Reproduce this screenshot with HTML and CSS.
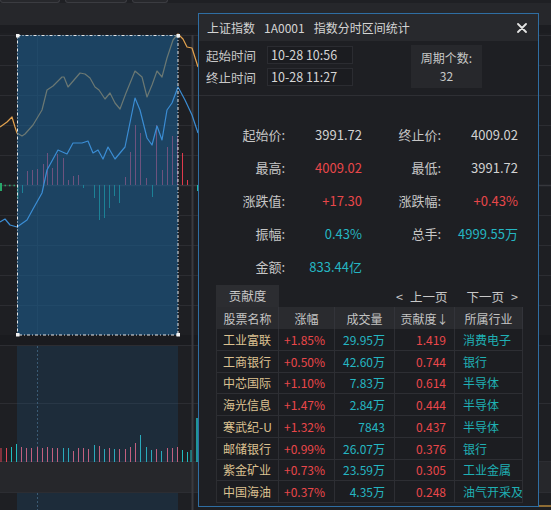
FILE: index.html
```html
<!DOCTYPE html>
<html lang="zh">
<head>
<meta charset="utf-8">
<title>指数分时区间统计</title>
<link rel="stylesheet" href="styles.css">
</head>
<body>
<div class="app">
  <div class="toolbar">
    <span class="tb-btn b1"></span><span class="tb-btn b2"></span><span class="tb-btn b3"></span>
  </div>
  <div class="header"></div>
  <div class="subbar"></div>
  <svg class="chart" viewBox="0 33 551 477" width="551" height="477" xmlns="http://www.w3.org/2000/svg">
    <rect x="0" y="33" width="551" height="302" fill="#1e1f23"/>
    <rect x="0" y="335" width="551" height="10" fill="#1a1b1f"/>
    <rect x="0" y="345" width="551" height="117" fill="#1e1f23"/>
    <rect x="0" y="462" width="551" height="30" fill="#26272b"/>
    <rect x="0" y="492" width="551" height="18" fill="#1e1f23"/>
    <g stroke="#2c2d32" stroke-width="1">
      <line x1="0" y1="35.5" x2="551" y2="35.5"/>
      <line x1="0" y1="65.5" x2="551" y2="65.5"/>
      <line x1="0" y1="95.5" x2="551" y2="95.5"/>
      <line x1="0" y1="125.5" x2="551" y2="125.5"/>
      <line x1="0" y1="155.5" x2="551" y2="155.5"/>
      <line x1="0" y1="215.5" x2="551" y2="215.5"/>
      <line x1="0" y1="245.5" x2="551" y2="245.5"/>
      <line x1="0" y1="275.5" x2="551" y2="275.5"/>
      <line x1="0" y1="305.5" x2="551" y2="305.5"/>
      <line x1="0" y1="345.5" x2="551" y2="345.5"/>
      <line x1="0" y1="403.5" x2="551" y2="403.5"/>
      <line x1="0" y1="461.5" x2="551" y2="461.5"/>
      <line x1="0" y1="492.5" x2="551" y2="492.5"/>
      <line x1="37.5" y1="35" x2="37.5" y2="335"/>
    </g>
    <line x1="0" y1="185.5" x2="551" y2="185.5" stroke="#36373c" stroke-width="1.5"/>
    <line x1="0" y1="185.5" x2="17" y2="185.5" stroke="#2aa36a" stroke-width="1.5" stroke-dasharray="1.5 3"/>
    <rect x="0" y="183" width="2" height="8" fill="#27a86a"/>
    <rect x="17" y="185" width="1.5" height="14" fill="#27a86a"/>
    <line x1="192.5" y1="35" x2="192.5" y2="510" stroke="#3a3b40" stroke-width="2"/>

    <g stroke="#e8466a" stroke-width="1">
      <line x1="27.5" y1="185" x2="27.5" y2="171"/>
      <line x1="32.5" y1="185" x2="32.5" y2="170"/>
      <line x1="37.5" y1="185" x2="37.5" y2="169"/>
      <line x1="43.5" y1="185" x2="43.5" y2="164"/>
      <line x1="47.5" y1="185" x2="47.5" y2="153"/>
      <line x1="52.5" y1="185" x2="52.5" y2="168"/>
      <line x1="57.5" y1="185" x2="57.5" y2="154"/>
      <line x1="63.5" y1="185" x2="63.5" y2="158"/>
      <line x1="68.5" y1="185" x2="68.5" y2="180"/>
      <line x1="73.5" y1="185" x2="73.5" y2="176"/>
      <line x1="78.5" y1="185" x2="78.5" y2="175"/>
      <line x1="125.5" y1="185" x2="125.5" y2="177"/>
      <line x1="130.5" y1="185" x2="130.5" y2="152"/>
      <line x1="135.5" y1="185" x2="135.5" y2="125"/>
      <line x1="140.5" y1="185" x2="140.5" y2="133"/>
      <line x1="146.5" y1="185" x2="146.5" y2="178"/>
      <line x1="156.5" y1="185" x2="156.5" y2="125"/>
      <line x1="162.5" y1="185" x2="162.5" y2="170"/>
      <line x1="167.5" y1="185" x2="167.5" y2="147"/>
      <line x1="172.5" y1="185" x2="172.5" y2="136"/>
      <line x1="177.5" y1="185" x2="177.5" y2="136"/>
    </g>
    <g stroke="#e03a4c" stroke-width="1">
      <line x1="182.5" y1="185" x2="182.5" y2="153"/>
      <line x1="187.5" y1="185" x2="187.5" y2="180"/>
    </g>
    <g stroke="#1fb8a6" stroke-width="1">
      <line x1="22.5" y1="185" x2="22.5" y2="193"/>
      <line x1="83.5" y1="185" x2="83.5" y2="188"/>
      <line x1="94.5" y1="185" x2="94.5" y2="198"/>
      <line x1="99.5" y1="185" x2="99.5" y2="220"/>
      <line x1="104.5" y1="185" x2="104.5" y2="218"/>
      <line x1="109.5" y1="185" x2="109.5" y2="208"/>
      <line x1="114.5" y1="185" x2="114.5" y2="196"/>
      <line x1="119.5" y1="185" x2="119.5" y2="203"/>
      <line x1="152.5" y1="185" x2="152.5" y2="197"/>
      <line x1="197.5" y1="185" x2="197.5" y2="191"/>
    </g>

    <polyline fill="none" stroke="#e3a24e" stroke-width="1.2" stroke-linejoin="round"
      points="0,127 7,122 12,117 15,127 17,133 22,136 25,134 33,125 42,110 47,90 53,86 62,77 64,77 68,87 80,73 85,74 90,78 95,87 99,90 105,99 110,93 115,103 120,109 126,93 135,71 142,77 147,97 152,85 157,71 162,77 167,58 173,40 178,34 183,39 187,47 192,48 198,67"/>

    <rect x="17" y="35" width="161" height="300" fill="#1a5b8c" fill-opacity="0.6"/>

    <polyline fill="none" stroke="#3b8dd4" stroke-width="1.2" stroke-linejoin="round"
      points="0,222 5,219 10,225 17,227 27,220 33,209 42,193 47,170 58,150 67,154 73,143 82,143 88,141 93,153 98,150 103,159 108,147 115,159 125,147 135,98 140,110 147,138 152,145 157,126 162,140 167,110 172,103 178,87 185,100 192,115 198,133"/>

    <rect x="17.5" y="35.5" width="160.5" height="299.5" fill="none" stroke="#e6e6e6" stroke-width="1" stroke-dasharray="3 2 1 2"/>
    <g fill="#f2f2f2">
      <rect x="16" y="34" width="3.5" height="3.5"/>
      <rect x="176.5" y="34" width="3.5" height="3.5"/>
      <rect x="16" y="333" width="3.5" height="3.5"/>
      <rect x="176.5" y="333" width="3.5" height="3.5"/>
    </g>

    <rect x="17" y="346" width="161" height="116" fill="#1a5b8c" fill-opacity="0.22"/>
    <rect x="17" y="493" width="161" height="17" fill="#1a5b8c" fill-opacity="0.22"/>
    <line x1="37.5" y1="346" x2="37.5" y2="461" stroke="#3b5b74" stroke-dasharray="2 2"/>
    <line x1="37.5" y1="493" x2="37.5" y2="510" stroke="#3b5b74" stroke-dasharray="2 2"/>
    <g stroke-width="1">
      <line x1="1" y1="462" x2="1" y2="448" stroke="#e04656"/>
      <line x1="6.5" y1="462" x2="6.5" y2="448" stroke="#e04656"/>
      <line x1="11.5" y1="462" x2="11.5" y2="447" stroke="#20bcc0"/>
      <line x1="16.5" y1="462" x2="16.5" y2="444" stroke="#20bcc0"/>
      <line x1="21.5" y1="462" x2="21.5" y2="447" stroke="#c2607e"/>
      <line x1="26.5" y1="462" x2="26.5" y2="448" stroke="#c2607e"/>
      <line x1="31.5" y1="462" x2="31.5" y2="448" stroke="#c2607e"/>
      <line x1="37.5" y1="462" x2="37.5" y2="447" stroke="#c2607e"/>
      <line x1="42.5" y1="462" x2="42.5" y2="448" stroke="#c2607e"/>
      <line x1="47.5" y1="462" x2="47.5" y2="447" stroke="#c2607e"/>
      <line x1="52.5" y1="462" x2="52.5" y2="448" stroke="#c2607e"/>
      <line x1="57.5" y1="462" x2="57.5" y2="448" stroke="#c2607e"/>
      <line x1="63.5" y1="462" x2="63.5" y2="448" stroke="#2aaabb"/>
      <line x1="68.5" y1="462" x2="68.5" y2="448" stroke="#2aaabb"/>
      <line x1="73.5" y1="462" x2="73.5" y2="451" stroke="#c2607e"/>
      <line x1="78.5" y1="462" x2="78.5" y2="448" stroke="#c2607e"/>
      <line x1="83.5" y1="462" x2="83.5" y2="448" stroke="#c2607e"/>
      <line x1="88.5" y1="462" x2="88.5" y2="449" stroke="#c2607e"/>
      <line x1="94.5" y1="462" x2="94.5" y2="445" stroke="#2aaabb"/>
      <line x1="99.5" y1="462" x2="99.5" y2="446" stroke="#c2607e"/>
      <line x1="104.5" y1="462" x2="104.5" y2="449" stroke="#2aaabb"/>
      <line x1="109.5" y1="462" x2="109.5" y2="448" stroke="#c2607e"/>
      <line x1="114.5" y1="462" x2="114.5" y2="449" stroke="#2aaabb"/>
      <line x1="119.5" y1="462" x2="119.5" y2="449" stroke="#c2607e"/>
      <line x1="125.5" y1="462" x2="125.5" y2="449" stroke="#c2607e"/>
      <line x1="130.5" y1="462" x2="130.5" y2="447" stroke="#c2607e"/>
      <line x1="135.5" y1="462" x2="135.5" y2="443" stroke="#c2607e"/>
      <line x1="140.5" y1="462" x2="140.5" y2="435" stroke="#2aaabb"/>
      <line x1="146.5" y1="462" x2="146.5" y2="447" stroke="#2aaabb"/>
      <line x1="151.5" y1="462" x2="151.5" y2="450" stroke="#2aaabb"/>
      <line x1="156.5" y1="462" x2="156.5" y2="449" stroke="#c2607e"/>
      <line x1="161.5" y1="462" x2="161.5" y2="451" stroke="#2aaabb"/>
      <line x1="167.5" y1="462" x2="167.5" y2="448" stroke="#c2607e"/>
      <line x1="172.5" y1="462" x2="172.5" y2="448" stroke="#c2607e"/>
      <line x1="177.5" y1="462" x2="177.5" y2="447" stroke="#c2607e"/>
      <line x1="182.5" y1="462" x2="182.5" y2="450" stroke="#20bcc0"/>
      <line x1="187.5" y1="462" x2="187.5" y2="452" stroke="#20bcc0"/>
      <line x1="191" y1="462" x2="191" y2="450" stroke="#20bcc0"/>
      <line x1="197" y1="462" x2="197" y2="418" stroke="#20bcc0" stroke-width="1.5"/>
    </g>
    <line x1="539" y1="506" x2="551" y2="506" stroke="#d9a040" stroke-width="1.2"/>
  </svg>

  <div class="dialog">
    <div class="dlg-title">
      <span>上证指数</span><span>1A0001</span><span>指数分时区间统计</span>
      <svg class="close" viewBox="0 0 10 10" width="10" height="10"><path d="M1 1 L9 9 M9 1 L1 9" stroke="#e4e4e4" stroke-width="1.8" stroke-linecap="round"/></svg>
    </div>
    <div class="times">
      <div class="time-rows">
        <div class="time-row"><span class="t-label">起始时间</span><span class="t-box">10-28 10:56</span></div>
        <div class="time-row"><span class="t-label">终止时间</span><span class="t-box">10-28 11:27</span></div>
      </div>
      <div class="period"><span class="p-line">周期个数:</span><span class="p-line">32</span></div>
    </div>
    <div class="stats">
      <span class="lbl">起始价:</span><span class="val">3991.72</span><span class="lbl">终止价:</span><span class="val">4009.02</span>
      <span class="lbl">最高:</span><span class="val red">4009.02</span><span class="lbl">最低:</span><span class="val">3991.72</span>
      <span class="lbl">涨跌值:</span><span class="val red">+17.30</span><span class="lbl">涨跌幅:</span><span class="val red">+0.43%</span>
      <span class="lbl">振幅:</span><span class="val cyan">0.43%</span><span class="lbl">总手:</span><span class="val cyan">4999.55万</span>
      <span class="lbl">金额:</span><span class="val cyan">833.44亿</span>
    </div>
    <div class="contrib">
      <div class="tabs">
        <span class="tab">贡献度</span>
        <div class="pager">
          <span class="pg"><span class="arr">&lt;</span>上一页</span>
          <span class="pg">下一页<span class="arr">&gt;</span></span>
        </div>
      </div>
      <div class="grid">
        <div class="row head"><span>股票名称</span><span>涨幅</span><span>成交量</span><span>贡献度↓</span><span>所属行业</span></div>
        <div class="row"><span class="c-name">工业富联</span><span class="c-chg">+1.85%</span><span class="c-vol">29.95万</span><span class="c-con">1.419</span><span class="c-ind">消费电子</span></div>
        <div class="row"><span class="c-name">工商银行</span><span class="c-chg">+0.50%</span><span class="c-vol">42.60万</span><span class="c-con">0.744</span><span class="c-ind">银行</span></div>
        <div class="row"><span class="c-name">中芯国际</span><span class="c-chg">+1.10%</span><span class="c-vol">7.83万</span><span class="c-con">0.614</span><span class="c-ind">半导体</span></div>
        <div class="row"><span class="c-name">海光信息</span><span class="c-chg">+1.47%</span><span class="c-vol">2.84万</span><span class="c-con">0.444</span><span class="c-ind">半导体</span></div>
        <div class="row"><span class="c-name">寒武纪-U</span><span class="c-chg">+1.32%</span><span class="c-vol">7843</span><span class="c-con">0.437</span><span class="c-ind">半导体</span></div>
        <div class="row"><span class="c-name">邮储银行</span><span class="c-chg">+0.99%</span><span class="c-vol">26.07万</span><span class="c-con">0.376</span><span class="c-ind">银行</span></div>
        <div class="row"><span class="c-name">紫金矿业</span><span class="c-chg">+0.73%</span><span class="c-vol">23.59万</span><span class="c-con">0.305</span><span class="c-ind">工业金属</span></div>
        <div class="row"><span class="c-name">中国海油</span><span class="c-chg">+0.37%</span><span class="c-vol">4.35万</span><span class="c-con">0.248</span><span class="c-ind">油气开采及</span></div>
      </div>
    </div>
  </div>
</div>
</body>
</html>
```

FILE: styles.css
```css
* { box-sizing: border-box; }
html, body { margin: 0; padding: 0; }
body {
  width: 551px;
  height: 510px;
  overflow: hidden;
  background: #1e1f23;
  font-family: "Noto Sans CJK SC", "Microsoft YaHei", sans-serif;
}
.app { position: relative; width: 551px; height: 510px; overflow: hidden; }

.toolbar {
  height: 3px;
  display: flex;
  align-items: flex-end;
  gap: 5px;
  background: #1f2024;
  overflow: hidden;
}
.tb-btn {
  flex: none;
  height: 20px;
  border: 1px solid #3b3c41;
  border-top: none;
  border-radius: 0 0 3px 3px;
  background: #27282c;
}
.b1 { width: 60px; }
.b2 { width: 62px; }
.b3 { width: 36px; }
.header { height: 22px; background: #26272b; }
.subbar { height: 8px; background: #1c1d21; }
.chart { display: block; width: 551px; height: 477px; }

.dialog {
  position: absolute;
  left: 198px;
  top: 13px;
  width: 341px;
  height: 494px;
  border: 1px solid #2f6ea3;
  background: #1e1f23;
  color: #c8c8c8;
}
.dlg-title {
  height: 27px;
  background: #28292d;
  display: flex;
  align-items: center;
  padding-left: 8px;
  font-size: 12px;
  color: #d4d4d4;
}
.dlg-title span { margin-right: 9px; }
.close { margin-left: auto; margin-right: 11px; flex: none; }

.times {
  height: 55px;
  display: flex;
  align-items: flex-start;
  padding: 5px 0 0 7px;
  border-bottom: 1px solid #2e2f34;
}
.time-rows { display: flex; flex-direction: column; gap: 4px; }
.time-row { display: flex; align-items: center; height: 18px; font-size: 12.5px; }
.t-label { width: 61px; color: #c8c8c8; }
.t-box {
  width: 86px;
  height: 18px;
  line-height: 16px;
  padding-left: 3px;
  background: #1b1c20;
  border: 1px solid #2b2c31;
  color: #d6d6d6;
}
.period {
  margin-left: 58px;
  margin-top: -1px;
  width: 71px;
  height: 43px;
  background: #27282c;
  display: flex;
  flex-direction: column;
  justify-content: center;
  align-items: center;
  font-size: 12px;
  color: #c8c8c8;
}
.p-line { display: block; line-height: 17.5px; height: 17.5px; }

.stats {
  display: grid;
  grid-template-columns: 86px 77px 79px 77px;
  grid-auto-rows: 33px;
  padding-top: 22px;
  font-size: 13px;
  line-height: 33px;
  text-align: right;
}
.lbl { color: #c6c6c6; }
.val { color: #d2d2d2; }
.red { color: #e9474a; }
.cyan { color: #25b6c2; }

.contrib { margin: 2px 0 0 17px; width: 307px; }
.tabs { display: flex; align-items: center; height: 22px; }
.tab {
  width: 63px;
  height: 22px;
  line-height: 22px;
  text-align: center;
  background: #2c2d31;
  font-size: 12.5px;
  color: #c8c8c8;
}
.pager {
  margin-left: auto;
  display: flex;
  gap: 19px;
  padding-right: 5px;
  font-size: 12.5px;
  color: #c8c8c8;
}
.pg { display: flex; align-items: center; gap: 7px; }
.arr { font-size: 12.5px; }

.grid { border-left: 1px solid #2c2d31; }
.row {
  display: grid;
  grid-template-columns: 62px 56px 60px 60px 68px;
  height: 21.75px;
  align-items: center;
  font-size: 12px;
  background: #1c1d21;
  border-bottom: 1px solid #2d2e33;
}
.row > span {
  height: 100%;
  display: flex;
  align-items: center;
  white-space: nowrap;
  overflow: hidden;
  border-right: 1px solid #2d2e33;
}
.row.head { height: 22px; background: #2a2b2f; border-bottom: none; color: #c4c4c4; }
.row.head > span { justify-content: center; border-right-color: #33343a; }
.c-name { padding-left: 6px; color: #dcc291; }
.c-chg { padding-left: 5px; color: #e9474a; }
.c-vol { justify-content: flex-end; padding-right: 9px; color: #25b6c2; }
.c-con { justify-content: flex-end; padding-right: 8px; color: #e9474a; }
.c-ind { padding-left: 8px; color: #1fb0b4; }
```
